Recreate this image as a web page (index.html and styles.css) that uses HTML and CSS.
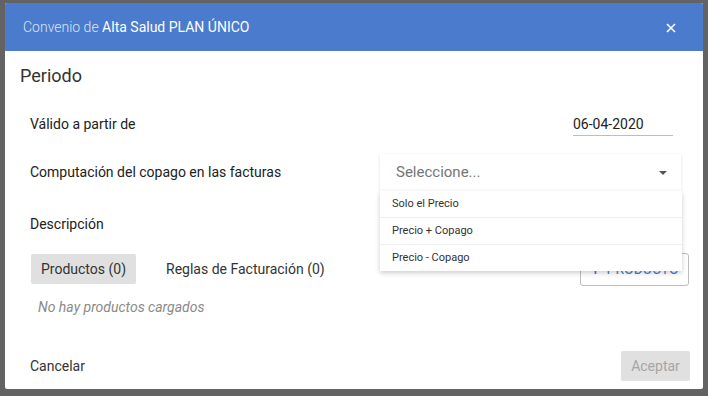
FILE: index.html
```html
<!DOCTYPE html>
<html>
<head>
  <meta charset="utf-8">
  <title>Convenio</title>
  <link rel="stylesheet" href="styles.css">
</head>
<body>
  <div class="modal">
    <div class="modal-header">
      <div class="modal-title"><span class="muted">Convenio de</span> Alta Salud PLAN ÚNICO</div>
      <svg class="close" width="10" height="10" viewBox="0 0 10 10">
        <path d="M1 1L9 9M9 1L1 9" stroke="#fff" stroke-width="1.6"/>
      </svg>
    </div>

    <div class="modal-body">
      <h2 class="section-title">Periodo</h2>

      <div class="field-row first">
        <span class="label">Válido a partir de</span>
        <div class="date-field">06-04-2020</div>
      </div>

      <div class="field-row">
        <span class="label">Computación del copago en las facturas</span>
        <div class="select">
          <span class="placeholder">Seleccione...</span>
          <span class="arrow"></span>
          <!-- menu abierto -->
          <ul class="menu">
            <li>Solo el Precio</li>
            <li>Precio + Copago</li>
            <li>Precio - Copago</li>
          </ul>
        </div>
      </div>

      <div class="field-row desc">
        <span class="label">Descripción</span>
      </div>

      <div class="tabs-row">
        <div class="tabs">
          <div class="tab active">Productos (0)</div>
          <div class="tab">Reglas de Facturación (0)</div>
        </div>
        <div class="add-btn"><span class="plus">+</span> PRODUCTO</div>
      </div>

      <p class="empty">No hay productos cargados</p>
    </div>

    <div class="modal-footer">
      <span class="cancel">Cancelar</span>
      <div class="accept">Aceptar</div>
    </div>
  </div>
</body>
</html>
```

FILE: styles.css
```css
body {
  margin: 0;
  background: #636363;
  font-family: Roboto, "Liberation Sans", sans-serif;
  color: #212121;
}

.modal {
  margin: 3px 0 0 5px;
  width: 698px;
  height: 386px;
  background: #fff;
  display: flex;
  flex-direction: column;
  border-radius: 2px;
}

/* cabecera azul */
.modal-header {
  height: 48px;
  flex-shrink: 0;
  background: #4a7bcc;
  color: #fff;
  display: flex;
  align-items: center;
  justify-content: space-between;
  padding: 0 27px 0 18px;
  font-size: 14px;
  border-radius: 2px 2px 0 0;
}

.muted {
  color: rgba(255, 255, 255, 0.82);
  font-weight: 300;
}

.close {
  margin-top: 2px;
}

.modal-body {
  padding: 13px 14px 0 15px;
}

.section-title {
  margin: 0;
  font-size: 18px;
  line-height: 24px;
  font-weight: 400;
  color: #333;
}

.field-row {
  display: flex;
  align-items: center;
  justify-content: space-between;
  height: 48px;
  padding-left: 10px;
  font-size: 14px;
}

.field-row.first {
  margin-top: 12px;
}

.field-row.desc {
  margin-top: 4px;
}

.date-field {
  width: 100px;
  height: 23px;
  line-height: 24px;
  border-bottom: 1px solid #bdbdbd;
  margin-right: 16px;
  color: #222;
}

.select {
  position: relative;
  width: 301px;
  height: 37px;
  margin-right: 8px;
  display: flex;
  align-items: center;
  justify-content: space-between;
  padding: 0 14px 0 16px;
  box-sizing: border-box;
  box-shadow: 0 1px 3px rgba(0, 0, 0, 0.12);
  background: #fff;
}

.placeholder {
  font-size: 15px;
  color: #757575;
}

.arrow {
  width: 0;
  height: 0;
  border-left: 4px solid transparent;
  border-right: 4px solid transparent;
  border-top: 4px solid #555;
  margin-top: 1px;
}

.menu {
  position: absolute;
  top: 100%;
  left: 0;
  width: 302px;
  margin: 0;
  padding: 0;
  list-style: none;
  background: #fff;
  box-shadow: 0 2px 5px rgba(0, 0, 0, 0.2);
  z-index: 2;
  font-size: 11px;
  color: #333;
}

.menu li {
  height: 26px;
  line-height: 26px;
  padding-left: 12px;
  border-bottom: 1px solid #eee;
}

.menu li:last-child {
  border-bottom: none;
}

.tabs-row {
  display: flex;
  align-items: center;
  justify-content: space-between;
  margin-top: 4px;
  height: 34px;
  padding-left: 11px;
  font-size: 14px;
}

.tabs {
  display: flex;
  gap: 20px;
}

.tab {
  height: 30px;
  line-height: 30px;
  padding: 0 10px;
  border-radius: 2px;
  color: #333;
}

.tab.active {
  background: #e0e0e0;
}

.add-btn {
  width: 109px;
  height: 33px;
  box-sizing: border-box;
  border: 1px solid #bdbdbd;
  border-radius: 3px;
  display: flex;
  align-items: center;
  justify-content: center;
  gap: 6px;
  color: #4a7bcc;
}

.plus {
  font-size: 18px;
}

.empty {
  margin: 12px 0 0 18px;
  line-height: 18px;
  font-size: 14px;
  font-style: italic;
  color: #8a8a8a;
}

.modal-footer {
  margin-top: auto;
  display: flex;
  align-items: center;
  justify-content: space-between;
  padding: 0 13px 8px 25px;
  font-size: 14px;
}

.cancel {
  color: #333;
}

.accept {
  width: 69px;
  height: 30px;
  line-height: 30px;
  text-align: center;
  background: #e0e0e0;
  color: #a6a6a6;
  border-radius: 2px;
}
```
